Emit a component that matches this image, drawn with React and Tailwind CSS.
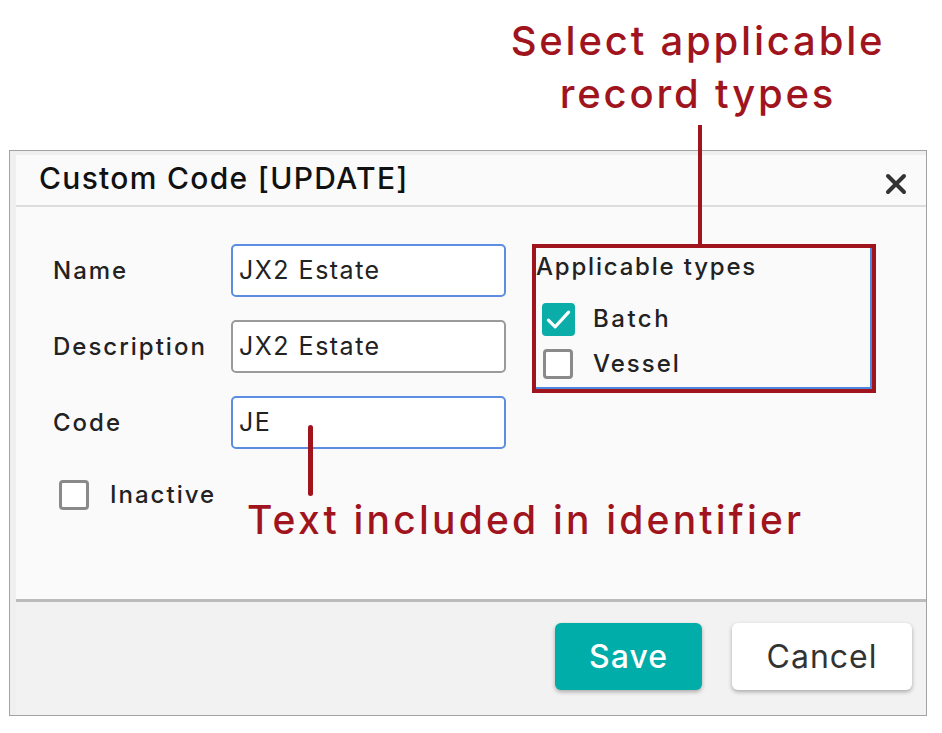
import React from "react";

const font = { fontFamily: "Inter, 'Noto Sans', sans-serif" };

const Check = ({ checked }) =>
  checked ? (
    <span className="flex h-[33px] w-[33px] items-center justify-center rounded-[4px] bg-[#0aada8]">
      <svg width="27" height="27" viewBox="0 0 24 24" fill="none" stroke="white" strokeWidth="2.8" strokeLinecap="round" strokeLinejoin="round">
        <path d="M3 12.5l6 6L21 5.5" />
      </svg>
    </span>
  ) : (
    <span className="block h-[30px] w-[30px] rounded-[4px] border-[3px] border-[#8a8a8a] bg-white" />
  );

const Field = ({ label, value, focused }) => (
  <div className="flex items-center">
    <div className="w-[178px] text-[24px] font-medium tracking-[2px] text-[#222]">{label}</div>
    <div
      className={`flex h-[53px] w-[275px] items-center rounded-[5px] border-2 bg-white px-[6px] text-[25px] tracking-[1.5px] text-[#222] ${
        focused ? "border-[#5b8de0]" : "border-[#9a9a9a]"
      }`}
    >
      {value}
    </div>
  </div>
);

export default function App() {
  return (
    <div className="relative h-[733px] w-[942px] overflow-hidden bg-white" style={font}>
      <div className="pl-[9px] pt-[150px]">
        <div className="flex h-[566px] w-[918px] flex-col border border-[#a3a3a3] bg-[#efefef] pl-[6px] pt-[4px]">
          <div className="flex h-[52px] items-center justify-between border-b-2 border-[#dddddd] bg-[#fafafa] pl-[23px] pr-[18px]">
            <span className="-mt-[4px] text-[30px] font-medium tracking-[1.3px] text-[#111]">Custom Code [UPDATE]</span>
            <svg width="24" height="24" viewBox="0 0 24 24" className="mt-[8px]" stroke="#333" strokeWidth="4" strokeLinecap="round">
              <path d="M4 4l16 16M20 4L4 20" />
            </svg>
          </div>

          <div className="flex h-[392px] bg-[#fafafa] pl-[37px] pt-[37px]">
            <div className="flex flex-col gap-[23px]">
              <Field label="Name" value="JX2 Estate" focused />
              <Field label="Description" value="JX2 Estate" />
              <Field label="Code" value="JE" focused />
              <div className="flex items-center gap-[21px] pl-[6px] pt-[5px]">
                <Check />
                <span className="text-[24px] font-medium tracking-[2px] text-[#222]">Inactive</span>
              </div>
            </div>

            <div className="ml-[26px] h-[149px] w-[344px] border-4 border-[#a0141e]">
              <div className="h-full border-b-2 border-r-2 border-[#4f86dd] pl-[1px]">
                <div className="-ml-[1px] pt-[1px] text-[24px] font-medium tracking-[1.8px] text-[#222]">Applicable types</div>
                <div className="mt-[16px] flex items-center gap-[18px] pl-[5px]">
                  <Check checked />
                  <span className="text-[24px] font-medium tracking-[2.5px] text-[#222]">Batch</span>
                </div>
                <div className="mt-[9px] flex items-center gap-[20px] pl-[6px]">
                  <Check />
                  <span className="text-[24px] font-medium tracking-[2px] text-[#222]">Vessel</span>
                </div>
              </div>
            </div>
          </div>

          <div className="h-[3px] bg-[#bbbbbb]" />

          <div className="flex flex-1 items-start justify-end gap-[30px] bg-[#f2f2f2] pr-[14px] pt-[21px]">
            <button className="h-[67px] w-[147px] rounded-[6px] bg-[#00ada8] text-[32px] font-medium tracking-[1px] text-white shadow-[0_2px_4px_rgba(0,0,0,0.3)]">
              Save
            </button>
            <button className="h-[67px] w-[180px] rounded-[6px] bg-white text-[32px] font-normal tracking-[1px] text-[#333] shadow-[0_2px_4px_rgba(0,0,0,0.3)]">
              Cancel
            </button>
          </div>
        </div>
      </div>

      {/* annotations */}
      <div className="absolute left-[448px] top-[14px] w-[500px] text-center text-[40px] font-medium leading-[53px] tracking-[2.8px] text-[#a0141e]">
        Select applicable
        <br />
        record types
      </div>
      <div className="absolute left-[698px] top-[125px] h-[122px] w-[4px] bg-[#a0141e]" />
      <div className="absolute left-[308px] top-[425px] h-[71px] w-[5px] rounded-full bg-[#a0141e]" />
      <div className="absolute left-[247px] top-[494px] text-[39px] font-medium leading-[52px] tracking-[3.2px] text-[#a0141e]">
        Text included in identifier
      </div>
    </div>
  );
}
